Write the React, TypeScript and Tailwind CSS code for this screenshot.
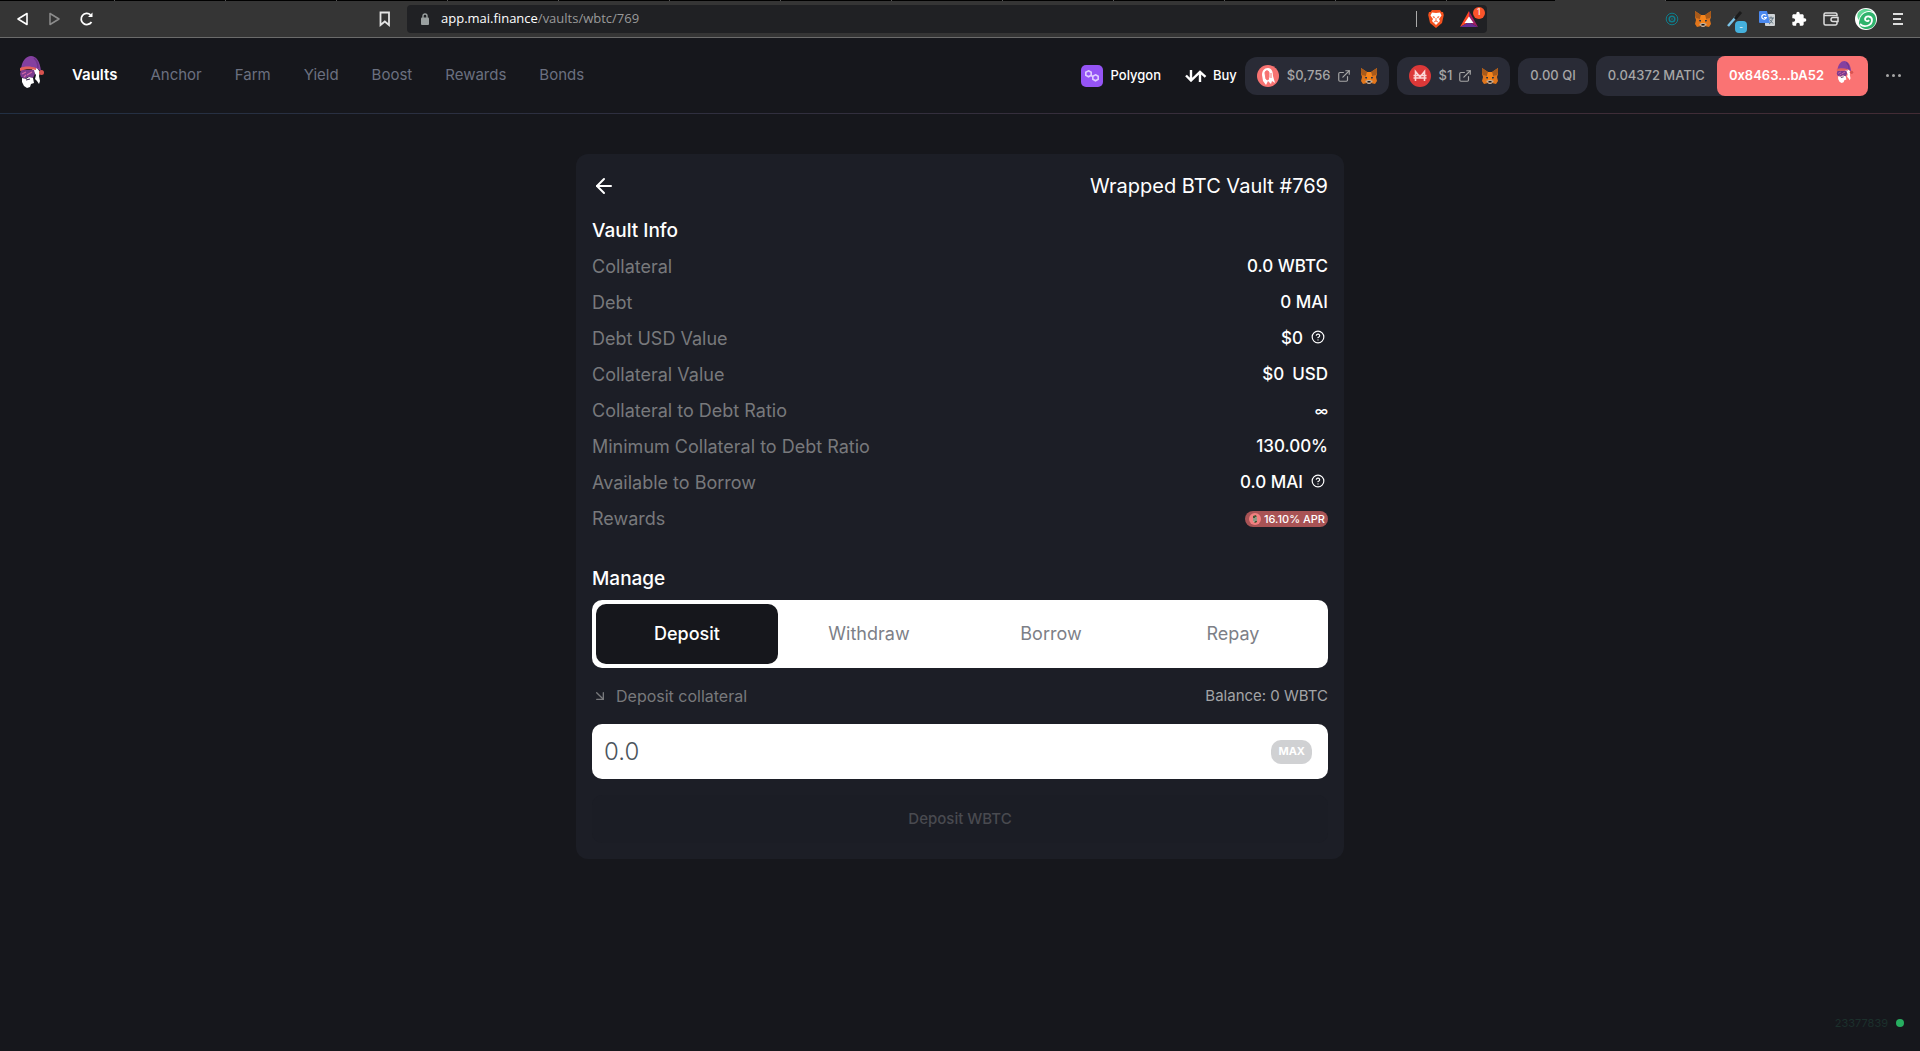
import React, { useState } from "react";
import {
  ArrowLeft,
  ArrowDownRight,
  ExternalLink,
  CircleHelp,
} from "lucide-react";
import { MdExtension } from "react-icons/md";

const links = ["Vaults", "Anchor", "Farm", "Yield", "Boost", "Rewards", "Bonds"];
const tabs = ["Deposit", "Withdraw", "Borrow", "Repay"];
const browserTabs = Array.from({ length: 14 }, (_, i) => i);

function Fox({ className }: { className: string }) {
  return (
    <svg className={className} viewBox="0 0 16 16" aria-hidden="true">
      <path d="M0 0l6 4h4l6-4v6l-1 3 1 4-2 3-4-1-1 1H7l-1-1-4 1-2-3 1-4-1-3z" fill="#e2761b" />
      <path d="M0 0l6 4-1 4-4-1-1-2zM16 0l-6 4 1 4 4-1 1-2z" fill="#a85a1a" />
      <path d="M5 8l1 4 1 2h2l1-2 1-4-1-4H6z" fill="#f6851b" />
      <path d="M4 9h2v1.500H4.500zM12 9h-2v1.500h1.500z" fill="#233447" />
      <path d="M4 13l3-1h2l3 1-2 2-1 1H7l-1-1z" fill="#c0ad9e" />
      <path d="M6.500 13h3v1.500h-3z" fill="#161616" />
    </svg>
  );
}

function Wizard({ className }: { className: string }) {
  return (
    <svg className={className} viewBox="0 0 26 32" aria-hidden="true">
      <path d="M13 13l5-1 3 4-1 4 1 5-1 3-2-3-2-2 1-4z" fill="#fff" />
      <path d="M2 13C3 5 7 0 12 0s9 5 10 15l-5-3z" fill="#8440a0" />
      <path d="M15 2c3 3 4 7 4 10" stroke="#6d3389" strokeWidth="1.500" fill="none" />
      <path d="M2 14h13l1 4-2 4-5-1-3 2-4-2-1-3z" fill="#7a3b8f" />
      <path d="M1 12c4-2 11-2 16 0v2c-5-1-11-1-16 1z" fill="#e4605c" />
      <circle cx="22.500" cy="16.500" r="2.500" fill="#d9534f" />
      <path d="M3 18l4-2M8 19l5-3M5 21l2-2" stroke="#d568a8" strokeWidth="1.200" />
      <path d="M3 22l4 1 3-2 4 1 1 5-3 1-1 3-3 1-3-2-2-4z" fill="#fff" />
      <path d="M7 24l4-1" stroke="#3a2450" strokeWidth="1.200" />
    </svg>
  );
}

function BrowserBar() {
  return (
    <div>
      {/* bottom edge of the tab strip */}
      <div className="flex h-px overflow-hidden bg-black pl-1">
        {browserTabs.map((i) => (
          <span key={i} className={`w-[111px] shrink-0 border-r border-[#555] ${i === 13 ? "ml-[108px] bg-[#353535]" : ""}`} />
        ))}
      </div>
      <div className="flex h-[37px] items-center border-b border-[#6b6b6b] bg-[#353535] text-white">
        <div className="flex items-center gap-[15px] pl-[13px]">
          <button aria-label="Back">
            <svg width="18" height="18" viewBox="0 0 18 18" fill="none" stroke="#fff" strokeWidth="1.600" strokeLinejoin="round">
              <path d="M14 3.500v11L5 9z" />
            </svg>
          </button>
          <button aria-label="Forward">
            <svg width="18" height="18" viewBox="0 0 18 18" fill="none" stroke="#8c8c8c" strokeWidth="1.500" strokeLinejoin="round">
              <path d="M4 3.500v11L13 9z" />
            </svg>
          </button>
          <button aria-label="Reload">
            <svg width="18" height="18" viewBox="0 0 18 18" fill="none" stroke="#fff" strokeWidth="1.800">
              <path d="M12.500 12A5.600 5.600 0 1 1 11.500 4.800" />
              <path d="M13.500 2.500v4.500H9z" fill="#fff" stroke="none" />
            </svg>
          </button>
        </div>
        <button aria-label="Bookmark" className="ml-[282px]">
          <svg width="12" height="16" viewBox="0 0 12 16" fill="none" stroke="#e4e4e4" strokeWidth="1.800">
            <path d="M1.500 1.500h8.500v12.500L5.800 10.500 1.500 14z" />
          </svg>
        </button>
        <div className="ml-4 flex h-7 w-[1080px] items-center rounded bg-[#202124] pl-[14px]">
          <svg width="8" height="12" viewBox="0 0 8 12" aria-hidden="true">
            <path d="M2 5V3a2 2 0 0 1 4 0v2" fill="none" stroke="#9aa0a0" strokeWidth="1.400" />
            <rect y="4.500" width="8" height="7.500" rx="1" fill="#9aa0a0" />
          </svg>
          <p className="ml-3 font-['Open_Sans',sans-serif] text-[13px] text-[#9a9a9a]">
            <span className="text-white">app.mai.finance</span>/vaults/wbtc/769
          </p>
          <span className="ml-auto h-4 w-px bg-[#aaa]" />
          <button aria-label="Brave Shields" className="ml-[11px]">
            <svg width="16" height="18" viewBox="0 0 16 18">
              <path d="M4 0h8l1.500 2 1.500 0 .8 3L14 13l-6 5-6-5L.200 5 1 2h1.500z" fill="#f4511e" />
              <path d="M8 3l4-.5 1.500 3L11 9l1 2-4 4-4-4 1-2-2.500-3.500 1.500-3z" fill="#fff" />
              <path d="M4.500 6l2.500 1-1 1.500zM11.500 6L9 7l1 1.500z" fill="#f4511e" />
              <path d="M8 8v3M6 12l2-1 2 1" fill="none" stroke="#f4511e" strokeWidth=".8" />
            </svg>
          </button>
          <button aria-label="Brave Rewards" className="relative mr-[9px] ml-4">
            <svg width="18" height="16" viewBox="0 0 18 16">
              <path d="M9 0L0 16l9-5z" fill="#ff4724" />
              <path d="M0 16h18l-9-5z" fill="#662d91" />
              <path d="M9 0l9 16-9-5z" fill="#9e1f63" />
              <path d="M9 5.500l4.500 6.500h-9z" fill="#fff" />
            </svg>
            <span className="absolute -top-1 left-[13px] flex size-3 items-center justify-center rounded-full bg-[#fb542b] font-['Roboto',sans-serif] text-[9px]">
              1
            </span>
          </button>
        </div>
        <div className="ml-auto flex items-center gap-4 pr-[17px]">
          <svg width="14" height="14" viewBox="0 0 14 14" fill="none" stroke="#0f7d8c">
            <circle cx="7" cy="7" r="5.800" />
            <circle cx="7" cy="7" r="2.800" strokeWidth="1.500" />
            <circle cx="7" cy="7" r=".8" fill="#0f7d8c" stroke="none" />
          </svg>
          <Fox className="size-4" />
          <span className="relative size-4">
            <svg width="16" height="16" viewBox="0 0 16 16">
              <path d="M1 15l8-9" stroke="#7cc4e8" strokeWidth="2.500" />
              <path d="M8 8l6-7" stroke="#1b1b1b" strokeWidth="3" />
            </svg>
            <span className="absolute top-[10px] left-2 flex size-3 items-center justify-center rounded-sm bg-[#45b0dc] text-[8px]">-</span>
          </span>
          <svg width="16" height="16" viewBox="0 0 16 16">
            <rect x="6" y="3" width="10" height="12" rx="1" fill="#cfd3d6" />
            <path d="M9.500 7h5.500M12 5.500V7M10 13c2-1 3-3 3.500-6M10.500 8.500l3.500 4" stroke="#5f7380" fill="none" />
            <path d="M1 0h7l3 12H1a1 1 0 0 1-1-1V1a1 1 0 0 1 1-1z" fill="#4a88ee" />
            <path d="M7 4.500A2.300 2.300 0 1 0 7.300 6.500H5" stroke="#fff" fill="none" strokeWidth="1.200" />
          </svg>
          <MdExtension className="size-4" />
          <svg width="16" height="14" viewBox="0 0 16 14" fill="none" stroke="#ddd" strokeWidth="1.500">
            <path d="M14 4.500V2.500A1.500 1.500 0 0 0 12.500 1h-10A1.500 1.500 0 0 0 1 2.500v9A1.500 1.500 0 0 0 2.500 13h10a1.500 1.500 0 0 0 1.500-1.500V10M1 3.500h13" />
            <path d="M15 5.500H10a2 2 0 0 0 0 4h5z" />
          </svg>
          <svg width="22" height="22" viewBox="0 0 22 22" fill="none">
            <circle cx="11" cy="11" r="11" fill="#fff" />
            <path d="M3 5A10 10 0 0 1 18 4C12 1 5 5 4 12 2 10 2 7 3 5z" fill="#5fd896" />
            <path d="M4 16C4 9 8 4 14 4c5 0 7 4 7 8 0 5-4 9-9 9-4 0-7-2-8-5z" fill="#2fb36c" />
            <path d="M5 16c4 4 12 2 12-4 0-4-6-5-7-1 0 2 3 3 4 1" stroke="#fff" strokeWidth="1.800" />
          </svg>
          <button aria-label="Menu" className="flex flex-col gap-[3px]">
            <span className="h-0.5 w-[10px] bg-[#ddd]" />
            <span className="h-0.5 w-2 bg-[#ddd]" />
            <span className="h-0.5 w-[10px] bg-[#ddd]" />
          </button>
        </div>
      </div>
    </div>
  );
}

function Header() {
  return (
    <header>
      <div className="flex h-[75px] items-center px-[19px]">
        <a href="#" aria-label="Home" className="mr-[27px]">
          <Wizard className="-mt-2 h-8 w-[26px]" />
        </a>
        <nav className="flex items-center gap-[33px] text-[15px]">
          {links.map((link) => (
            <a
              key={link}
              href="#"
              className={link === "Vaults" ? "font-semibold text-white" : "text-[#6b7080]"}
            >
              {link}
            </a>
          ))}
        </nav>

        <div className="ml-auto flex items-center gap-2 text-[13px] font-medium text-[#a6a6a6]">
          <button className="mr-4 flex items-center gap-2 text-white">
            <svg width="22" height="22" viewBox="0 0 22 22" fill="none" stroke="#e0ccff" strokeWidth="1.600">
              <rect width="22" height="22" rx="5" fill="#9554f5" stroke="none" />
              <path d="M7.500 5.800l2.700 1.500v3l-2.700 1.500-2.700-1.500v-3z" />
              <path d="M14.500 9.800l2.700 1.500v3l-2.700 1.500-2.700-1.500v-3z" />
              <path d="M10 10.300l2 1.500" />
            </svg>
            Polygon
          </button>
          <button className="flex items-center gap-[6px] text-white">
            <svg width="22" height="12" viewBox="0 0 22 12" fill="none" stroke="#fff" strokeWidth="2.400">
              <path d="M1 5.500l5 5L15 1.800l5.500 5M6 0v10.500M15 2v10" />
            </svg>
            Buy
          </button>
          <div className="flex h-[38px] items-center rounded-xl bg-[#292b36] px-3">
            <svg width="22" height="22" viewBox="0 0 22 22">
              <circle cx="11" cy="11" r="11" fill="#f77372" />
              <path d="M5 10c0-4 2-7 6-7 4 0 5 4 5 8l2 7-3-2-1 3-3-3-2 4-3-4z" fill="#fff" />
              <path d="M8 8c0-3 4-3 4 0v4l-1 3-2-1zM14 8v5" fill="#f77372" stroke="#f77372" />
            </svg>
            <span className="ml-2">$0,756</span>
            <ExternalLink className="ml-1.5 size-[14px]" />
            <Fox className="ml-2.5 size-4" />
          </div>
          <div className="flex h-[38px] items-center rounded-xl bg-[#292b36] px-3">
            <svg width="22" height="22" viewBox="0 0 22 22">
              <circle cx="11" cy="11" r="11" fill="#dc3838" />
              <path d="M6.500 16V6.500L11 12l4.500-5.500V16M4.500 10.500h13M4.500 13h13" fill="none" stroke="#fbd5d5" strokeWidth="1.600" />
            </svg>
            <span className="ml-2">$1</span>
            <ExternalLink className="ml-1.5 size-[14px]" />
            <Fox className="ml-2.5 size-4" />
          </div>
          <div className="flex h-9 items-center rounded-xl bg-[#292b36] px-3">0.00 QI</div>
          <div className="flex h-10 items-center rounded-xl bg-[#292b36]">
            <span className="px-3">0.04372 MATIC</span>
            <button className="flex h-10 items-center gap-3 rounded-lg bg-[#fa7373] pr-[14px] pl-3 font-semibold text-white">
              0x8463...bA52
              <Wizard className="-mt-2 h-[22px] w-[18px]" />
            </button>
          </div>
          <button aria-label="More" className="ml-2.5 flex gap-[3px]">
            <span className="size-[3px] rounded-full bg-[#a6a6a6]" />
            <span className="size-[3px] rounded-full bg-[#a6a6a6]" />
            <span className="size-[3px] rounded-full bg-[#a6a6a6]" />
          </button>
        </div>
      </div>
      <div className="h-px bg-gradient-to-r from-[#223044] to-[#432c35]" />
    </header>
  );
}

function Row({ label, children }: { label: string; children: React.ReactNode }) {
  return (
    <div className="flex h-9 items-center justify-between">
      <dt className="text-lg text-[#78797c]">{label}</dt>
      <dd className="flex items-center font-medium text-white">{children}</dd>
    </div>
  );
}

function Help() {
  return <CircleHelp className="mr-[3px] mb-1 ml-2 size-[14px]" />;
}

function VaultCard() {
  const [tab, setTab] = useState("Deposit");
  const [amount, setAmount] = useState("");

  return (
    <main className="mx-auto mt-10 w-full max-w-3xl rounded-xl bg-[#1c1e26] p-4 text-[17px]">
      <div className="flex h-8 items-center justify-between text-white">
        <button aria-label="Go back">
          <ArrowLeft className="size-6" />
        </button>
        <h1 className="text-xl">Wrapped BTC Vault #769</h1>
      </div>

      <h2 className="mt-[15px] text-[19px] leading-7 font-medium text-white">Vault Info</h2>
      <dl className="mt-1">
        <Row label="Collateral">0.0 WBTC</Row>
        <Row label="Debt">0 MAI</Row>
        <Row label="Debt USD Value">
          $0
          <Help />
        </Row>
        <Row label="Collateral Value">
          <span className="mr-2">$0</span> USD
        </Row>
        <Row label="Collateral to Debt Ratio">
          <span className="text-sm">∞</span>
        </Row>
        <Row label="Minimum Collateral to Debt Ratio">130.00%</Row>
        <Row label="Available to Borrow">
          0.0 MAI
          <Help />
        </Row>
        <Row label="Rewards">
          <span className="flex h-4 items-center gap-[3px] rounded-full bg-[#a85355] pr-[3px] pl-1 text-[11px]">
            <svg width="12" height="12" viewBox="0 0 12 12">
              <circle cx="6" cy="6" r="6" fill="#f28080" />
              <path d="M4 3l3-1 1 3v4L6 10 4 8z" fill="#453" />
              <path d="M5 5v4M7 4v4" stroke="#fff" strokeWidth=".8" />
            </svg>
            16.10% APR
          </span>
        </Row>
      </dl>

      <h2 className="mt-7 text-[19px] leading-7 font-medium text-white">Manage</h2>
      <div role="tablist" className="mt-[7px] grid h-[68px] grid-cols-4 rounded-[10px] bg-white p-1 text-lg">
        {tabs.map((name) => (
          <button
            key={name}
            role="tab"
            aria-selected={tab === name}
            onClick={() => setTab(name)}
            className={`rounded-[10px] ${
              tab === name ? "bg-[#16171c] font-medium text-white" : "text-[#7d7f87]"
            }`}
          >
            {name}
          </button>
        ))}
      </div>

      <div className="mt-4 flex h-6 items-center justify-between">
        <label htmlFor="amount" className="flex items-center gap-2 text-base text-[#78797c]">
          <ArrowDownRight className="size-4" />
          Deposit collateral
        </label>
        <span className="text-[15px] text-[#a3a4a6]">Balance: 0 WBTC</span>
      </div>

      <div className="mt-4 flex h-[55px] items-center rounded-[10px] bg-white pr-4 pl-3">
        <input
          id="amount"
          value={amount}
          onChange={(e) => setAmount(e.target.value)}
          placeholder="0.0"
          className="w-full text-2xl font-light text-[#4b545c] outline-none placeholder:text-[#4b545c]"
        />
        <button className="h-6 rounded-[10px] bg-[#d0d1d3] px-[7px] text-[11px] font-bold text-white">MAX</button>
      </div>

      <button disabled className="mt-4 h-12 w-full rounded-[10px] bg-[#1b1d25] text-[15px] font-medium text-[#494a50]">
        Deposit WBTC
      </button>
    </main>
  );
}

export default function App() {
  return (
    <div className="flex min-h-screen flex-col bg-[#16171c] font-['Inter',sans-serif]">
      <BrowserBar />
      <Header />
      <VaultCard />
      <footer className="mt-auto flex items-center justify-end gap-2 px-4 pb-5 text-[11px] text-[#1c302c]">
        23377839
        <span className="size-2 rounded-full bg-[#27ae60]" />
      </footer>
    </div>
  );
}
